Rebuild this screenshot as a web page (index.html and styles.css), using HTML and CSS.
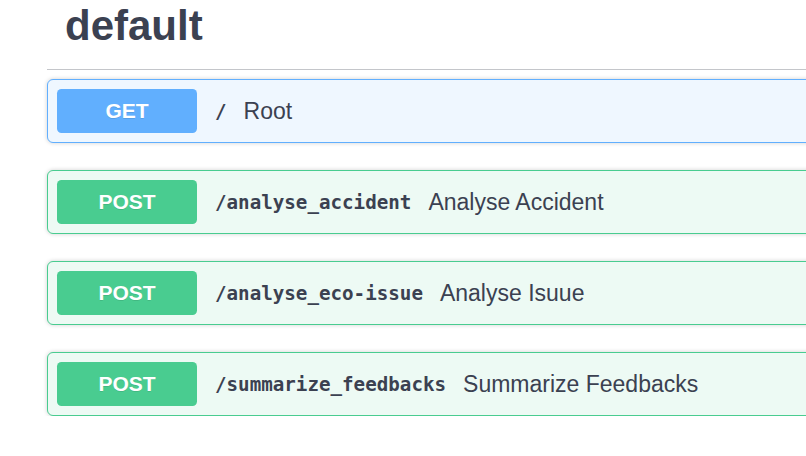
FILE: index.html
```html
<!DOCTYPE html>
<html lang="en">
<head>
<meta charset="utf-8">
<title>default</title>
<link rel="stylesheet" href="styles.css">
</head>
<body>
<div class="page">
  <section class="tag-section">
    <h3 class="tag-title"><span>default</span></h3>
    <div class="ops">
      <div class="opblock opblock-get">
        <span class="method">GET</span>
        <span class="path">/</span>
        <span class="desc">Root</span>
      </div>
      <div class="opblock opblock-post">
        <span class="method">POST</span>
        <span class="path">/analyse_accident</span>
        <span class="desc">Analyse Accident</span>
      </div>
      <div class="opblock opblock-post">
        <span class="method">POST</span>
        <span class="path">/analyse_eco-issue</span>
        <span class="desc">Analyse Isuue</span>
      </div>
      <div class="opblock opblock-post">
        <span class="method">POST</span>
        <span class="path">/summarize_feedbacks</span>
        <span class="desc">Summarize Feedbacks</span>
      </div>
    </div>
  </section>
</div>
</body>
</html>
```
FILE: styles.css
```css
html, body {
  margin: 0;
  padding: 0;
  background: #ffffff;
  overflow: hidden;
}

body {
  font-family: "Liberation Sans", Arial, sans-serif;
  color: #3b4151;
}

.page {
  width: 1000px;
  padding-left: 47px;
}

.tag-title {
  margin: 0;
  height: 70px;
  box-sizing: border-box;
  padding: 0 0 0 18px;
  border-bottom: 1px solid rgba(59, 65, 81, 0.3);
  font-size: 42px;
  font-weight: 700;
  line-height: 51px;
  color: #3b4151;
}

.ops {
  padding-top: 9px;
  display: flex;
  flex-direction: column;
  gap: 27px;
}

.opblock {
  height: 64px;
  box-sizing: border-box;
  border: 1.5px solid;
  border-radius: 6px;
  box-shadow: 0 0 4px rgba(0, 0, 0, 0.19);
  display: flex;
  align-items: center;
  padding: 0 9px;
}

.opblock-get {
  background: #eff7ff;
  border-color: #61affe;
}

.opblock-post {
  background: #edfaf4;
  border-color: #49cc90;
}

.method {
  flex: none;
  width: 140px;
  height: 44px;
  border-radius: 4.5px;
  color: #ffffff;
  font-size: 21px;
  font-weight: 700;
  display: flex;
  align-items: center;
  justify-content: center;
  text-shadow: 0 1px 0 rgba(0, 0, 0, 0.1);
}

.opblock-get .method {
  background: #61affe;
}

.opblock-post .method {
  background: #49cc90;
}

.path {
  margin-left: 18px;
  font-family: "DejaVu Sans Mono", monospace;
  font-weight: 700;
  font-size: 19.2px;
  color: #3b4151;
}

.desc {
  margin-left: 17px;
  font-size: 23px;
  color: #3b4151;
}
```
